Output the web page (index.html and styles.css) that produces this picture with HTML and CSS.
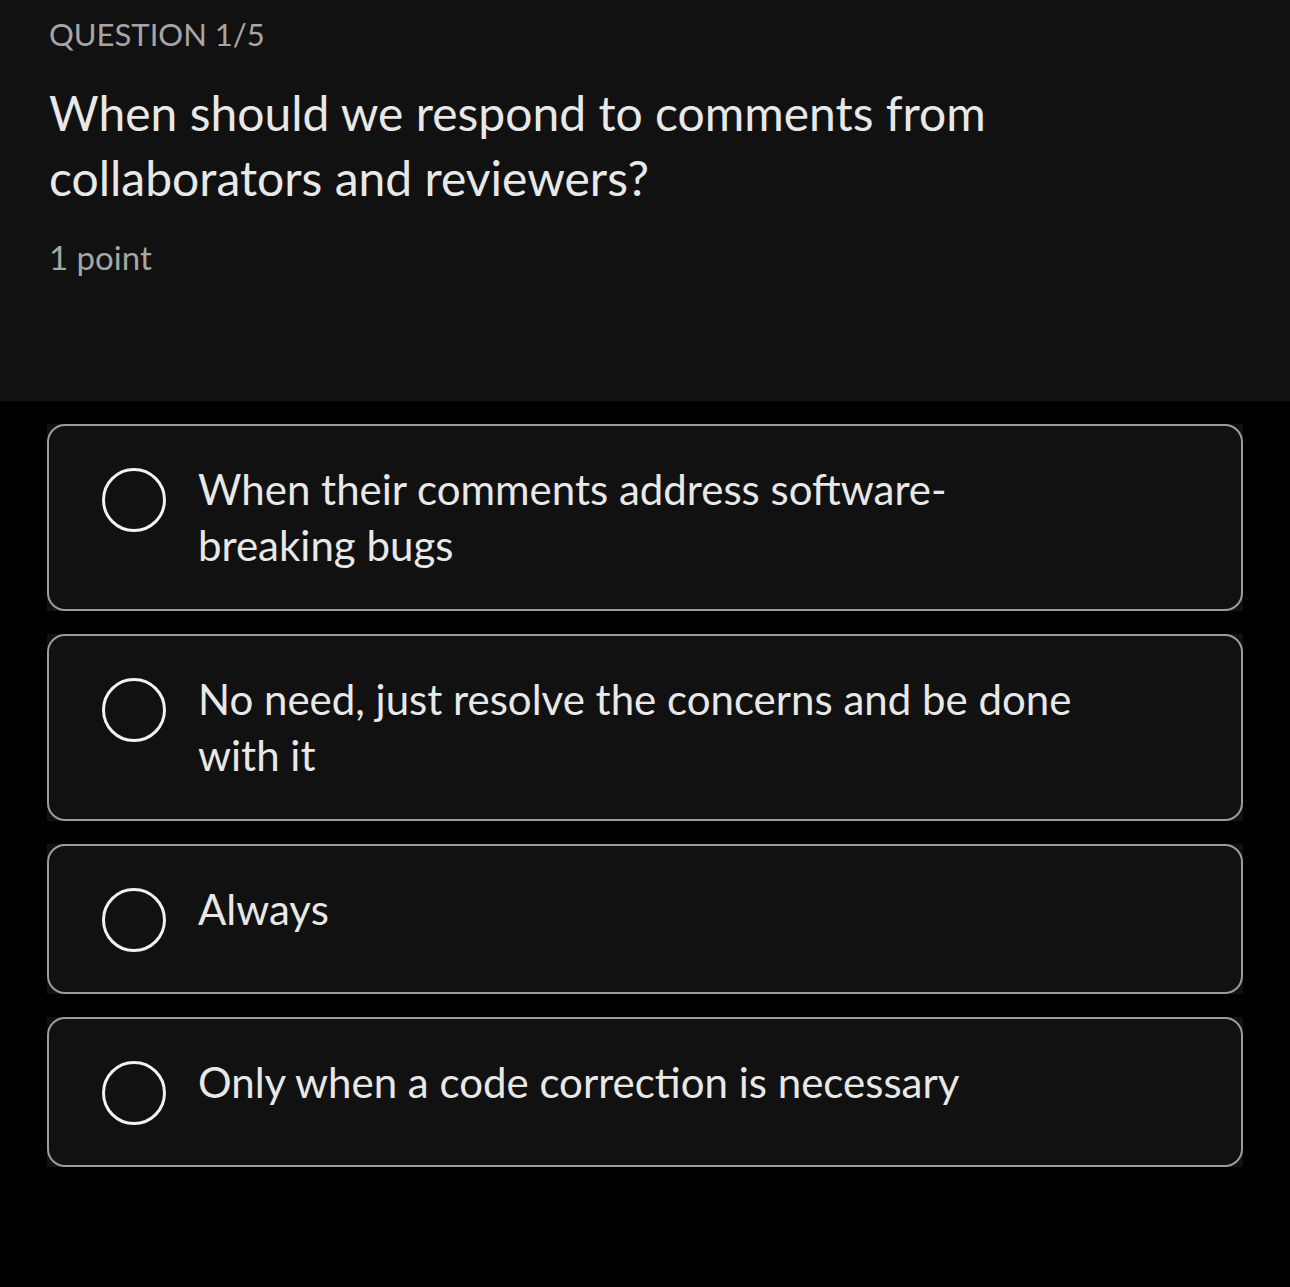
FILE: index.html
```html
<!DOCTYPE html>
<html lang="en">
<head>
  <meta charset="UTF-8">
  <meta name="viewport" content="width=device-width, initial-scale=1.0">
  <title>Quiz</title>
  <link rel="stylesheet" href="styles.css">
</head>
<body>
  <header class="quiz-head">
    <p class="counter">QUESTION 1/5</p>
    <h1 class="question">When should we respond to comments from collaborators and reviewers?</h1>
    <p class="points">1 point</p>
  </header>

  <main class="options">
    <div class="option">
      <label class="option-box">
        <span class="radio"></span>
        <span class="option-text">When their comments address software-breaking bugs</span>
      </label>
    </div>
    <div class="option">
      <label class="option-box">
        <span class="radio"></span>
        <span class="option-text">No need, just resolve the concerns and be done with it</span>
      </label>
    </div>
    <div class="option">
      <label class="option-box">
        <span class="radio"></span>
        <span class="option-text">Always</span>
      </label>
    </div>
    <div class="option">
      <label class="option-box">
        <span class="radio"></span>
        <span class="option-text">Only when a code correction is necessary</span>
      </label>
    </div>
  </main>
</body>
</html>
```

FILE: styles.css
```css
* { box-sizing: border-box; }
body {
  margin: 0;
  background: #000;
  color: #e8e8e8;
  font-family: Lato, "Open Sans", sans-serif;
}
.quiz-head {
  background: #111;
  height: 401px;
  padding: 12px 49px 0;
}
.counter {
  margin: 0;
  font-size: 31px;
  line-height: 44px;
  color: #a6a6a6;
}
.question {
  margin: 24px 0 0;
  max-width: 960px;
  font-size: 48px;
  font-weight: 400;
  line-height: 65px;
  color: #e8e8e8;
}
.points {
  margin: 25px 0 0;
  font-size: 33px;
  line-height: 44px;
  color: #a6a6a6;
}
.options {
  display: flex;
  flex-direction: column;
  gap: 23px;
  padding: 23px 47px;
}
.option {
  background: #111;
}
.option-box {
  display: flex;
  align-items: flex-start;
  gap: 32px;
  padding: 35px 60px 36px 53px;
  border: 2px solid #9c9ca0;
  border-radius: 18px;
  background: #111;
  cursor: pointer;
}
.radio {
  flex: none;
  width: 64px;
  height: 64px;
  margin: 7px 0 4px;
  border: 3px solid #f2f2f2;
  border-radius: 50%;
}
.option-text {
  max-width: 905px;
  font-size: 42px;
  line-height: 56px;
  color: #e8e8e8;
}
```
